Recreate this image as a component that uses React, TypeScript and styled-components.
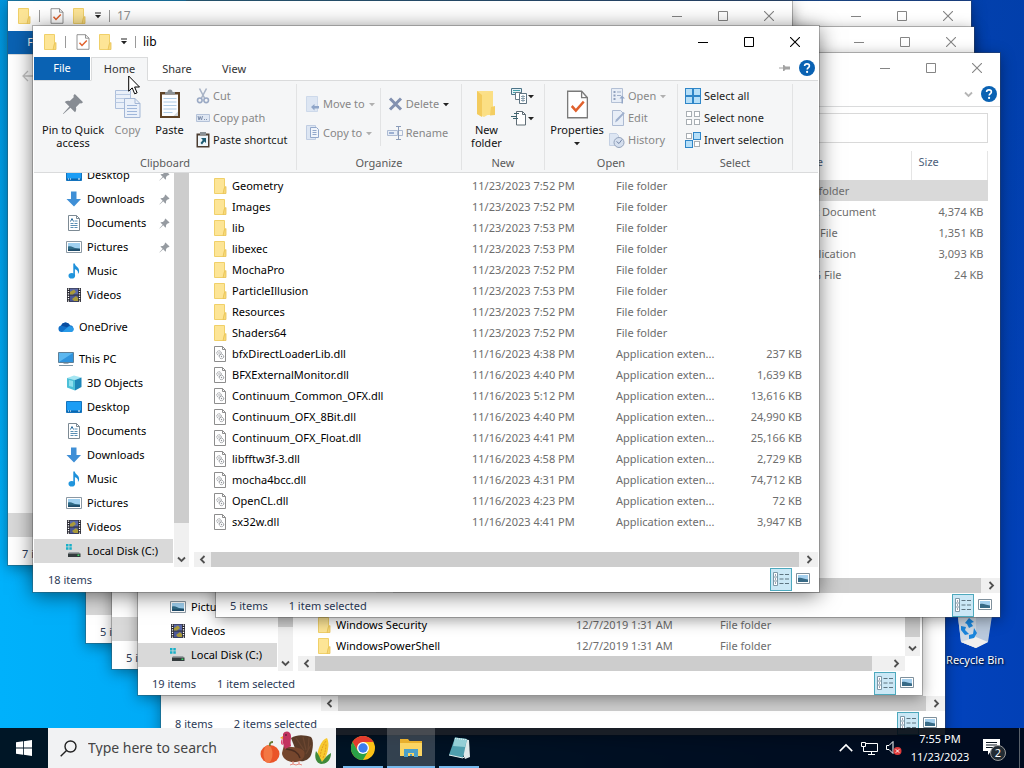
import React from 'react';
import styled, { createGlobalStyle, css } from 'styled-components';

const GlobalStyle = createGlobalStyle`
  *, *::before, *::after { box-sizing: border-box; }
  html, body { margin: 0; padding: 0; height: 100%; overflow: hidden; }
  body { font-family: "Noto Sans", "Open Sans", sans-serif; font-size: 11px; line-height: 16px; color: #111; }
  button, input { font: inherit; color: inherit; }
  button { border: 0; padding: 0; background: none; cursor: default; }
  svg { display: block; flex: none; }
`;

/* ---------- icons ---------- */

const FolderIcon = ({ size = 16 }: { size?: number }) => (
  <svg width={size} height={size} viewBox="0 0 16 16">
    <path d="M2.500.5h10v9.500l-1 5.500h-9z" fill="#fde596" stroke="#f0d069" />
    <path d="M12.500 9.500l1.500-1v7h-3z" fill="#f8da78" stroke="#e8c255" strokeWidth=".8" />
  </svg>
);

const DllIcon = () => (
  <svg width="16" height="16" viewBox="0 0 16 16" fill="none">
    <path d="M2.500.5h8l3 3v12h-11z" fill="#fff" stroke="#8d8d8d" />
    <path d="M10.500.5v3h3" stroke="#8d8d8d" />
    <circle cx="7" cy="7" r="2.200" stroke="#8b8f94" strokeDasharray="1.300 .6" />
    <circle cx="9.500" cy="10.500" r="2.200" stroke="#8b8f94" strokeDasharray="1.300 .6" />
    <circle cx="7" cy="7" r=".7" fill="#8b8f94" />
    <circle cx="9.500" cy="10.500" r=".7" fill="#8b8f94" />
  </svg>
);

const CheckDocIcon = ({ width = 14, height = 16 }: { width?: number; height?: number }) => (
  <svg width={width} height={height} viewBox="0 0 14 16" fill="none" preserveAspectRatio="none">
    <path d="M1 .7h8.500L13 4.200v11.100H1z" fill="#fff" stroke="#7a7a7a" strokeWidth=".8" />
    <path d="M9.500.7v3.500H13" stroke="#7a7a7a" strokeWidth=".8" />
    <path d="M3.500 8.800l2.500 2.600 4.800-5" stroke="#e0602c" strokeWidth="1.500" />
  </svg>
);

const CaretIcon = ({ color = '#222', bar = false }: { color?: string; bar?: boolean }) => (
  <svg width="8" height="8" viewBox="0 0 8 8">
    {bar && <path d="M1 .5h6v1H1z" fill={color} />}
    <path d="M1 3h6L4 6.200z" fill={color} />
  </svg>
);

const HelpIcon = () => (
  <svg width="16" height="16" viewBox="0 0 16 16">
    <circle cx="8" cy="8" r="8" fill="#0a62b3" />
    <path d="M5.600 6.100C5.600 4.700 6.600 3.900 8 3.900s2.400.8 2.400 2c0 1.700-2.200 1.800-2.200 3.700" fill="none" stroke="#fff" strokeWidth="1.600" />
    <circle cx="8.100" cy="11.900" r="1.100" fill="#fff" />
  </svg>
);

const PinIcon = ({ size = 11, color = '#969ba1' }: { size?: number; color?: string }) => (
  <svg width={size} height={size} viewBox="0 0 24 24">
    <path d="M14 1l9 9-2 1.500-1.500-.3-4.300 4.300c.6 2 .3 4-1 5.500l-5-5L1.500 23 1 22.500l7-7.700-5-5c1.500-1.300 3.500-1.600 5.500-1l4.300-4.300L12.500 2.600z" fill={color} />
  </svg>
);

const SidePinIcon = () => (
  <svg width="12" height="8" viewBox="0 0 12 8">
    <path d="M0 3.500h4V1h1.200l1.300 1.500H11V5.500H6.500L5.200 7H4V4.500H0z" fill="#a3a3a3" />
  </svg>
);

const DesktopIcon = () => (
  <svg width="16" height="16" viewBox="0 0 16 16">
    <path d="M.5 2.500h15v11H.5z" fill="#1b9df5" stroke="#1473bd" />
    <path d="M1 11.500h14v1.500H1z" fill="#0b66ae" />
    <path d="M2 12h1M4 12h1M12 12h2" stroke="#fff" />
  </svg>
);

const DownloadIcon = () => (
  <svg width="16" height="16" viewBox="0 0 16 16">
    <path d="M5 .5h5.500V8H15L8 15.500.5 8H5z" fill="#3f8fd6" />
  </svg>
);

const DocumentIcon = () => (
  <svg width="16" height="16" viewBox="0 0 16 16" fill="none">
    <path d="M2.500.5h8l3 3v12h-11z" fill="#fff" stroke="#7d8a94" />
    <path d="M10.500.5v3h3" stroke="#7d8a94" />
    <path d="M4.500 6.500l1.500-3 1.500 3" stroke="#2b6b9b" />
    <path d="M4.500 8.500h3M8.500 6h3M8.500 8.500h3M4.500 10.500h7M4.500 12.500h3M8.500 12.500h3" stroke="#5a8fb4" />
  </svg>
);

const PictureIcon = () => (
  <svg width="16" height="16" viewBox="0 0 16 16">
    <path d="M.5 2.500h15v11H.5z" fill="#fff" stroke="#8b98a3" />
    <path d="M2 4h12v8H2z" fill="#9fd0f0" />
    <path d="M2 7.500c3-1 5 .5 7 1.500l5 .5V12H2z" fill="#2f6a86" />
    <path d="M2 10.500l12-.5v2H2z" fill="#1e4c6b" />
  </svg>
);

const MusicIcon = () => (
  <svg width="16" height="16" viewBox="0 0 16 16">
    <ellipse cx="5.800" cy="12.700" rx="3.300" ry="2.800" fill="#2196dd" />
    <path d="M7.300.5h1.500c.3 3 4.700 3.700 4.300 8-.1 1.200-.7 2-1.200 2.500.6-3-1-4-3-5v7H7.300z" fill="#1e90da" />
  </svg>
);

const VideoIcon = () => (
  <svg width="16" height="16" viewBox="0 0 16 16">
    <path d="M1 1h14v14H1z" fill="#2a2a33" />
    <path d="M4 1.500h8v6H4z" fill="#5a68a8" />
    <path d="M4 8.500h8v6H4z" fill="#4b5796" />
    <path d="M4 5l4-2.500 2 2.500-3 2.500H4zM6 12l4-3 2 2v3H8z" fill="#a99a3a" />
    <path d="M2.500 1.500v14M13.500 1.500v14" stroke="#fff" strokeWidth="1.300" strokeDasharray="1.200 1.200" />
  </svg>
);

const OneDriveIcon = () => (
  <svg width="16" height="16" viewBox="0 0 16 16">
    <path d="M3.500 13A3.300 3.300 0 0 1 3 6.500 5 5 0 0 1 12 6.300 3.400 3.400 0 0 1 12.800 13z" fill="#1170c9" />
    <path d="M4 13l6.500-5.500c2-1 5 .3 5.300 2.600A3 3 0 0 1 12.800 13z" fill="#2a9be8" />
    <path d="M3 6.500A5 5 0 0 1 12 6.300L9 8.200z" fill="#0a4ea0" />
  </svg>
);

const PcIcon = () => (
  <svg width="16" height="16" viewBox="0 0 16 16">
    <path d="M.5 1.500h15v10H.5z" fill="#5bb7f0" stroke="#5d7f98" />
    <path d="M1 11L15 2v9z" fill="#2e93dd" />
    <path d="M5.500 12h5v1h-5z" fill="#9fb0bb" />
    <path d="M1 14.500h14" stroke="#7c95a5" />
  </svg>
);

const CubeIcon = () => (
  <svg width="16" height="16" viewBox="0 0 16 16">
    <path d="M1 3l7-2.500 7.500 2L9 5z" fill="#a6e6f2" />
    <path d="M1 3l8 2v10.500L1 12.500z" fill="#4cc0d8" />
    <path d="M9 5l6.500-2.500V12L9 15.500z" fill="#1d86b8" />
    <path d="M3 5l4 1v6l-4-1z" fill="#8fe0ee" />
  </svg>
);

const DiskIcon = () => (
  <svg width="16" height="16" viewBox="0 0 16 16">
    <path d="M0 1h2.500v2.500H0zM3.300 1h2.500v2.500H3.300zM0 4.300h2.500v2.500H0zM3.300 4.300h2.500v2.500H3.300z" fill="#18b0c8" />
    <path d="M3 9h10l1 1.500H2z" fill="#9aa0a4" />
    <path d="M2 10.500h12.500V14H2z" fill="#333b3d" />
    <path d="M11.500 11.500h1.800V13h-1.800z" fill="#3fdc6a" />
  </svg>
);

const CopyIcon = () => (
  <svg width="26" height="30" viewBox="0 0 26 30" fill="none">
    <path d="M.5 1.500h15v18H.5z" fill="#eaf0f9" stroke="#adbfdb" />
    <path d="M.5 5.500h15M.5 9.500h15M.5 13.500h15" stroke="#b9cae3" />
    <path d="M9.500 9.500h10.500l5 5v14h-15.500z" fill="#eaf0f9" stroke="#a4b7d6" />
    <path d="M20 9.500v5h5" stroke="#a4b7d6" />
    <path d="M12 16.500h10M12 19.500h10M12 22.500h10M12 25.500h10" stroke="#9fb6da" />
  </svg>
);

const PasteIcon = () => (
  <svg width="22" height="30" viewBox="0 0 22 30">
    <path d="M1 3h20v26H1z" fill="#5f4326" />
    <path d="M3 5.500h16V27H3z" fill="#fbfdff" />
    <path d="M6 5.500V3h2.500a2.500 2.500 0 0 1 5 0H16v2.500z" fill="#8a9196" />
    <path d="M4.500 9.500h13M4.500 13h13M4.500 16.500h13M4.500 20h13M4.500 23.500h9" stroke="#aecbe4" />
    <path d="M14.500 27l4.500-4.500V27z" fill="#d4dbe0" />
  </svg>
);

const CutIcon = () => (
  <svg width="14" height="16" viewBox="0 0 14 16" fill="none" stroke="#a9b4c6">
    <path d="M3.500.5l5 9.500M10.500.5l-5 9.500" strokeWidth="1.600" />
    <circle cx="3.800" cy="12.300" r="2.300" strokeWidth="1.600" stroke="#9aa9c4" />
    <circle cx="10.200" cy="12.300" r="2.300" strokeWidth="1.600" stroke="#9aa9c4" />
  </svg>
);

const CopyPathIcon = () => (
  <svg width="14" height="16" viewBox="0 0 14 16" fill="none">
    <path d="M.5 4.500h13v7H.5z" fill="#dfe7f3" stroke="#b4c2d8" />
    <path d="M2 6l1 4 1.200-3.500L5.500 10l1-4M8 9.500h1M10 9.500h1" stroke="#7f90ad" />
  </svg>
);

const PasteShortcutIcon = () => (
  <svg width="14" height="16" viewBox="0 0 14 16">
    <path d="M.5 1.500h13v14H.5z" fill="#4c3d31" />
    <path d="M2 3.500h10V14H2z" fill="#eef6fb" />
    <path d="M4 0h6v3H4z" fill="#8a9196" />
    <path d="M5 6h5v5L8.300 9.400 6 12.500 4.500 11l2.300-3z" fill="#1d5c73" />
  </svg>
);

const MoveToIcon = () => (
  <svg width="14" height="16" viewBox="0 0 14 16">
    <path d="M.5.5h11v15H.5z" fill="#dde6f3" stroke="#cdd9ea" />
    <path d="M5 11l3.500-3v2H13v2.500H8.500v2z" fill="#8fa5c8" />
  </svg>
);

const CopyToIcon = () => (
  <svg width="14" height="16" viewBox="0 0 14 16" fill="none">
    <path d="M.5.500h9v14h-9z" fill="#dde6f3" stroke="#c0cde2" />
    <path d="M4.500 2.500h6l2 2v8h-8z" fill="#f1f5fb" stroke="#93a8cb" />
    <path d="M6.500 5.500h4M6.500 7.500h4M6.500 9.500h4" stroke="#93a8cb" />
  </svg>
);

const DeleteIcon = () => (
  <svg width="16" height="14" viewBox="0 0 16 14">
    <path d="M3 1.500l11 11M14 1.500l-11 11" stroke="#8391b0" strokeWidth="3" />
  </svg>
);

const RenameIcon = () => (
  <svg width="16" height="16" viewBox="0 0 16 16" fill="none">
    <path d="M.5 5.500h10v5H.5z" fill="#e6edf7" stroke="#adbbd3" />
    <path d="M12 5.500h3.500v5H12" stroke="#adbbd3" />
    <path d="M2 7h5v2H2z" fill="#9cb0d2" />
    <path d="M9 1.500h5M11.500 1.500v13M9 14.500h5" stroke="#8b9cb9" />
  </svg>
);

const NewItemIcon = () => (
  <svg width="16" height="16" viewBox="0 0 16 16" fill="none">
    <path d="M.5.500h10v6H.5z" fill="#e4f1f6" stroke="#4c7488" />
    <path d="M2 2.500h7M2 4.500h3" stroke="#3fa0a8" />
    <path d="M4.500 4.500h6v7h-6z" fill="#fff" stroke="#6a7c88" />
    <path d="M8.500 5.500h7v10h-7z" fill="#fff" stroke="#5f7482" />
    <path d="M10 8.500h4M10 10.500h4M10 12.500h4M12 7v7" stroke="#8aa0ae" />
  </svg>
);

const EasyAccessIcon = () => (
  <svg width="16" height="16" viewBox="0 0 16 16" fill="none">
    <path d="M5.500 1.500h6l3 3v10.500h-9z" fill="#fff" stroke="#5f6c75" />
    <path d="M11.500 1.500v3h3" stroke="#5f6c75" />
    <path d="M3 3.500h5M0 6.500h6M2 8.500h5" stroke="#3d6470" />
  </svg>
);

const OpenIcon = () => (
  <svg width="14" height="16" viewBox="0 0 14 16" fill="none">
    <path d="M.5.500h11v14H.5z" fill="#e8eef7" stroke="#b3c0d5" />
    <path d="M2.500 3h2v2h-2zM2.500 6.500h2v2h-2zM2.500 10h2v2h-2z" fill="#8fa0bd" />
    <path d="M6 4h4M6 7.500h4" stroke="#9fafc9" />
    <path d="M10.500 15.500v-5h-2L11 7.500l3 3h-2v5z" fill="#93a6c6" />
  </svg>
);

const EditIcon = () => (
  <svg width="14" height="16" viewBox="0 0 14 16" fill="none">
    <path d="M1.500.500h8l3 3v12h-11z" fill="#e8eef7" stroke="#adbbd3" />
    <path d="M4 12.500l1-3L12.500 2l1.300 1.300L6.500 11z" fill="#9fb0cd" />
  </svg>
);

const HistoryIcon = () => (
  <svg width="14" height="16" viewBox="2 0 14 16" fill="none" overflow="visible">
    <path d="M.5 1.500h7l2 2v10H.5z" fill="#dde6f3" stroke="#c4d0e3" />
    <circle cx="10" cy="10.500" r="5" fill="#d5dfee" stroke="#93a2bb" />
    <path d="M7.500 9.500l2.500 2 3-4" stroke="#7587a8" />
  </svg>
);

const Tile = ({ x, y, on }: { x: number; y: number; on: boolean }) => (
  <rect x={x + 0.5} y={y + 0.5} width={on ? 7 : 5} height={on ? 7 : 5} fill={on ? '#b6dff8' : '#fff'} stroke={on ? '#2f86c8' : '#a8aeb3'} />
);

const SelectIcon = ({ mode }: { mode: 'all' | 'none' | 'invert' }) => (
  <svg width="16" height="16" viewBox="0 0 16 16">
    {mode === 'all' && (<><Tile x={0} y={0} on /><Tile x={8} y={0} on /><Tile x={0} y={8} on /><Tile x={8} y={8} on /></>)}
    {mode === 'none' && (<><Tile x={1} y={1} on={false} /><Tile x={9} y={1} on={false} /><Tile x={1} y={9} on={false} /><Tile x={9} y={9} on={false} /></>)}
    {mode === 'invert' && (<><Tile x={1} y={1} on={false} /><Tile x={8} y={0} on /><Tile x={0} y={8} on /><Tile x={9} y={9} on={false} /></>)}
  </svg>
);

const NewFolderIcon = () => (
  <svg width="24" height="30" viewBox="0 0 24 30">
    <path d="M2 2h16v21l-9 5-7-3z" fill="#fbe08a" />
    <path d="M2 2l5 4v22l-5-3z" fill="#f3cb5e" />
    <path d="M7 6l11-4v24H7z" fill="#fbdf84" />
    <path d="M16 18l4-1v9l-5 .5z" fill="#f4ce62" />
  </svg>
);

const Arrow = ({ dir, size = 9, color = '#505050' }: { dir: 'left' | 'right' | 'down' | 'up'; size?: number; color?: string }) => {
  const d = { left: 'M6.500 1L3 4.500 6.500 8', right: 'M2.500 1L6 4.500 2.500 8', down: 'M1 2.500L4.500 6 8 2.500', up: 'M.5 6.500L4.500 2.500 8.500 6.500' }[dir];
  return (
    <svg width={size} height={size} viewBox="0 0 9 9"><path d={d} fill="none" stroke={color} strokeWidth={size > 10 ? 1 : 1.8} /></svg>
  );
};

const DetailsViewIcon = () => (
  <svg width="16" height="14" viewBox="0 0 16 14" fill="none">
    <path d="M.5.500h4v13h-4zM.5 5h4M.5 9h4" fill="#fff" stroke="#7d98a8" />
    <path d="M2 3h1M2 7h1M2 11h1" stroke="#446" />
    <path d="M6.500 2.500h4M12 2.500h4M6.500 7h4M12 7h4M6.500 11.500h4M12 11.500h4" stroke="#5d7480" />
  </svg>
);

const LargeViewIcon = () => (
  <svg width="14" height="12" viewBox="0 0 14 12">
    <path d="M.5.500h13v10H.5z" fill="#fff" stroke="#7f909c" />
    <path d="M2 2h10v7H2z" fill="#a5d0ee" />
    <path d="M2 5c4-1 5 1 10 1.500V9H2z" fill="#386a86" />
  </svg>
);

/* ---------- window frame ---------- */

const WindowFrame = styled.section<{ $x: number; $y: number; $active?: boolean }>`
  position: absolute;
  left: ${p => p.$x}px;
  top: ${p => p.$y}px;
  width: ${p => (p.$active ? 786 : 784)}px;
  height: ${p => (p.$active ? 566 : 564)}px;
  padding: ${p => (p.$active ? 1 : 0)}px;
  display: flex;
  flex-direction: column;
  background: #fff;
  box-shadow: 0 0 0 1px rgba(70, 70, 70, 0.35), 0 3px ${p => (p.$active ? 20 : 14)}px rgba(0, 0, 0, ${p => (p.$active ? 0.55 : 0.4)});
`;

const TitleBar = styled.header<{ $active?: boolean }>`
  flex: none;
  display: flex;
  align-items: center;
  justify-content: flex-end;
  height: 30px;
  padding-left: 8px;
  font-size: 12px;
  color: ${p => (p.$active ? '#000' : '#8f8f8f')};
`;

const QuickAccess = styled.div`
  display: flex;
  align-items: center;
  flex: 1;
`;

const ToolSlot = styled.span<{ $width: number }>`
  display: flex;
  justify-content: center;
  width: ${p => p.$width}px;
`;

const Separator = styled.span`
  width: 1px;
  height: 12px;
  background: #9a9a9a;
`;

const WindowTitle = styled.h1`
  margin: 0 0 0 1px;
  font-size: inherit;
  font-weight: 400;
`;

const CaptionButton = styled.button`
  display: flex;
  align-items: center;
  justify-content: center;
  width: 46px;
  height: 29px;
  margin-bottom: 1px;
`;

const TabRow = styled.nav`
  flex: none;
  display: flex;
  align-items: center;
  gap: 1px;
  height: 24px;
  padding-right: 3px;
  border-bottom: 1px solid #dadbdc;
`;

const Tab = styled.button<{ $kind?: 'file' | 'current' }>`
  height: 24px;
  width: 56px;
  line-height: 22px;
  color: #333;
  ${p => p.$kind === 'file' && css`background: #0a62b3; color: #fff; height: 23px; margin-bottom: 1px;`}
  ${p => p.$kind === 'current' && css`
    width: 57px;
    background: #f5f6f7;
    border: 1px solid #dadbdc;
    border-bottom-color: #f5f6f7;
  `}
`;

const TabTools = styled.div`
  display: flex;
  align-items: center;
  gap: 8px;
  margin: 0 0 1px auto;
`;

const Body = styled.div`
  flex: 1;
  min-height: 0;
  display: flex;
`;

const StatusBar = styled.footer`
  flex: none;
  display: flex;
  align-items: center;
  gap: 21px;
  height: 24px;
  padding: 0 4px 0 14px;
  color: #2b3a57;
`;

const StatusText = styled.span`
  padding-top: 2px;
`;

const ViewButtons = styled.div`
  display: flex;
  align-items: center;
  margin-left: auto;
`;

const ViewButton = styled.button<{ $on?: boolean }>`
  display: flex;
  align-items: center;
  justify-content: center;
  width: 22px;
  height: 23px;
  border: 1px solid ${p => (p.$on ? '#4ea9bd' : 'transparent')};
  background: ${p => (p.$on ? '#cbe8f6' : 'transparent')};
`;

const CaptionButtons = ({ active }: { active?: boolean }) => {
  const stroke = active ? '#000' : '#858585';
  return (
    <>
      <CaptionButton aria-label="Minimize"><svg width="10" height="10" viewBox="0 0 10 10"><path d="M0 5.500h10" stroke={stroke} /></svg></CaptionButton>
      <CaptionButton aria-label="Maximize"><svg width="10" height="10" viewBox="0 0 10 10"><path d="M.5.500h9v9h-9z" fill="none" stroke={stroke} /></svg></CaptionButton>
      <CaptionButton aria-label="Close"><svg width="10" height="10" viewBox="0 0 10 10"><path d="M0 0l10 10M10 0L0 10" stroke={stroke} strokeWidth="1.100" /></svg></CaptionButton>
    </>
  );
};

/* ---------- scroll bars ---------- */

const VBar = styled.div<{ $right?: boolean }>`
  flex: none;
  display: flex;
  flex-direction: column;
  width: 15px;
  margin-left: ${p => (p.$right ? 0 : 1)}px;
  margin-right: ${p => (p.$right ? 2 : 0)}px;
  background: #f0f0f0;
`;

const HBar = styled.div<{ $corner: number }>`
  flex: none;
  display: flex;
  height: 15px;
  margin-right: ${p => p.$corner}px;
  background: #f0f0f0;
`;

const Thumb = styled.div<{ $rest: number; $vertical?: boolean }>`
  flex: 1;
  background: #cdcdcd;
  margin: ${p => (p.$vertical ? `0 0 ${p.$rest}px` : `0 ${p.$rest}px 0 0`)};
`;

const ScrollButton = styled.button<{ $width: number }>`
  flex: none;
  display: flex;
  align-items: center;
  justify-content: center;
  width: ${p => p.$width}px;
  height: 15px;
`;

const VerticalScroll = ({ rest, right }: { rest: number; right?: boolean }) => (
  <VBar $right={right}>
    <Thumb $vertical $rest={rest} />
    <ScrollButton $width={15} aria-label="Scroll down"><Arrow dir="down" /></ScrollButton>
  </VBar>
);

const HorizontalScroll = ({ rest, corner }: { rest: number; corner: number }) => (
  <HBar $corner={corner}>
    <ScrollButton $width={17} aria-label="Scroll left"><Arrow dir="left" /></ScrollButton>
    <Thumb $rest={rest} />
    <ScrollButton $width={17} aria-label="Scroll right"><Arrow dir="right" /></ScrollButton>
  </HBar>
);

/* ---------- navigation pane ---------- */

const NavPane = styled.nav`
  flex: none;
  width: 139px;
  display: flex;
  flex-direction: column;
  justify-content: flex-end;
  padding-bottom: 4px;
  overflow: hidden;
`;

const NavItem = styled.a<{ $root?: boolean; $selected?: boolean }>`
  flex: none;
  display: flex;
  align-items: center;
  gap: 5px;
  height: 24px;
  padding: 0 3px 0 ${p => (p.$root ? 24 : 32)}px;
  margin-top: ${p => (p.$root ? 8 : 0)}px;
  background: ${p => (p.$selected ? '#d9d9d9' : 'transparent')};
  color: #000;
  text-decoration: none;
  white-space: nowrap;
`;

const NavLabel = styled.span`
  flex: 1;
`;

type NavEntry = { label: string; icon: React.ReactNode; root?: boolean; pinned?: boolean; selected?: boolean };

const allPlaces: NavEntry[] = [
  { label: 'Desktop', icon: <DesktopIcon />, pinned: true },
  { label: 'Downloads', icon: <DownloadIcon />, pinned: true },
  { label: 'Documents', icon: <DocumentIcon />, pinned: true },
  { label: 'Pictures', icon: <PictureIcon />, pinned: true },
  { label: 'Music', icon: <MusicIcon /> },
  { label: 'Videos', icon: <VideoIcon /> },
  { label: 'OneDrive', icon: <OneDriveIcon />, root: true },
  { label: 'This PC', icon: <PcIcon />, root: true },
  { label: '3D Objects', icon: <CubeIcon /> },
  { label: 'Desktop', icon: <DesktopIcon /> },
  { label: 'Documents', icon: <DocumentIcon /> },
  { label: 'Downloads', icon: <DownloadIcon /> },
  { label: 'Music', icon: <MusicIcon /> },
  { label: 'Pictures', icon: <PictureIcon /> },
  { label: 'Videos', icon: <VideoIcon /> },
  { label: 'Local Disk (C:)', icon: <DiskIcon />, selected: true },
];

const lastPlaces = allPlaces.slice(-3);
const selectionOnly: NavEntry[] = [{ label: '', icon: null, selected: true }];

const Navigation = ({ places }: { places: NavEntry[] }) => (
  <NavPane>
    {places.map((e, i) => (
      <NavItem key={i} href="#" $root={e.root} $selected={e.selected}>
        {e.icon}
        <NavLabel>{e.label}</NavLabel>
        {e.pinned && <PinIcon />}
      </NavItem>
    ))}
  </NavPane>
);

/* ---------- file list ---------- */

const ListColumn = styled.div<{ $left: number }>`
  flex: 1;
  min-width: 0;
  display: flex;
  flex-direction: column;
  margin-left: ${p => p.$left}px;
`;

const ListRow = styled.div`
  flex: 1;
  min-height: 0;
  display: flex;
`;

const ListArea = styled.div<{ $bottom?: boolean }>`
  flex: 1;
  display: flex;
  flex-direction: column;
  justify-content: ${p => (p.$bottom ? 'flex-end' : 'flex-start')};
  padding: 2px 12px 0 20px;
  overflow: hidden;
`;

const FileTable = styled.table`
  width: 100%;
  table-layout: fixed;
  border-collapse: collapse;
`;

const HeadCell = styled.th`
  height: 29px;
  padding: 0 0 7px 7px;
  border-right: 1px solid #e5e5e5;
  text-align: left;
  font-weight: 400;
  color: #4c607a;
`;

const FileRow = styled.tr<{ $selected?: boolean }>`
  height: 21px;
  background: ${p => (p.$selected ? '#d9d9d9' : 'transparent')};
`;

const Cell = styled.td<{ $right?: boolean }>`
  padding: ${p => (p.$right ? '0 4px 0 0' : '0 0 0 7px')};
  text-align: ${p => (p.$right ? 'right' : 'left')};
  color: #6d6d6d;
  white-space: nowrap;
`;

const NameCell = styled(Cell)`
  padding: 0;
  color: #000;
`;

const NameLine = styled.span`
  display: flex;
  align-items: center;
  gap: 4px;
  margin-left: -2px;
`;

type FileEntry = { name?: string; date?: string; type: string; size?: string; selected?: boolean };

const Files = ({ files, head }: { files: FileEntry[]; head?: boolean }) => (
  <FileTable>
    <colgroup>
      <col width="251" />
      <col width="144" />
      <col width="120" />
      <col />
    </colgroup>
    {head && (
      <thead>
        <tr>
          <HeadCell aria-label="Name" />
          <HeadCell aria-label="Date modified" />
          <HeadCell>Type</HeadCell>
          <HeadCell>Size</HeadCell>
        </tr>
      </thead>
    )}
    <tbody>
      {files.map((f, i) => (
        <FileRow key={i} $selected={f.selected}>
          <NameCell>
            {f.name && <NameLine>{f.type === 'File folder' ? <FolderIcon /> : <DllIcon />}{f.name}</NameLine>}
          </NameCell>
          <Cell>{f.date}</Cell>
          <Cell>{f.type}</Cell>
          <Cell $right>{f.size}</Cell>
        </FileRow>
      ))}
    </tbody>
  </FileTable>
);

const folder = (name: string, date: string): FileEntry => ({ name, date, type: 'File folder' });
const dll = (name: string, time: string, size: string): FileEntry => ({ name, date: `11/16/2023 ${time}`, type: 'Application exten...', size });

const libFiles: FileEntry[] = [
  folder('Geometry', '11/23/2023 7:52 PM'),
  folder('Images', '11/23/2023 7:52 PM'),
  folder('lib', '11/23/2023 7:53 PM'),
  folder('libexec', '11/23/2023 7:53 PM'),
  folder('MochaPro', '11/23/2023 7:52 PM'),
  folder('ParticleIllusion', '11/23/2023 7:53 PM'),
  folder('Resources', '11/23/2023 7:52 PM'),
  folder('Shaders64', '11/23/2023 7:52 PM'),
  dll('bfxDirectLoaderLib.dll', '4:38 PM', '237 KB'),
  dll('BFXExternalMonitor.dll', '4:40 PM', '1,639 KB'),
  dll('Continuum_Common_OFX.dll', '5:12 PM', '13,616 KB'),
  dll('Continuum_OFX_8Bit.dll', '4:40 PM', '24,990 KB'),
  dll('Continuum_OFX_Float.dll', '4:41 PM', '25,166 KB'),
  dll('libfftw3f-3.dll', '4:58 PM', '2,729 KB'),
  dll('mocha4bcc.dll', '4:31 PM', '74,712 KB'),
  dll('OpenCL.dll', '4:23 PM', '72 KB'),
  dll('sx32w.dll', '4:41 PM', '3,947 KB'),
];

const programFiles: FileEntry[] = [
  folder('Windows Security', '12/7/2019 1:31 AM'),
  folder('WindowsPowerShell', '12/7/2019 1:31 AM'),
];

const setupFiles: FileEntry[] = [
  { type: 'File folder', selected: true },
  { type: 'Text Document', size: '4,374 KB' },
  { type: 'KEY File', size: '1,351 KB' },
  { type: 'Application', size: '3,093 KB' },
  { type: 'PNG File', size: '24 KB' },
];

/* ---------- ribbon ---------- */

const Ribbon = styled.div`
  flex: none;
  display: flex;
  height: 92px;
  background: #f5f6f7;
  border-bottom: 1px solid #dadbdc;
`;

const Group = styled.section<{ $width: number }>`
  display: flex;
  flex-direction: column;
  width: ${p => p.$width}px;
  margin: 3px 0 2px;
  border-right: 1px solid #e2e3e4;
`;

const GroupTools = styled.div`
  flex: 1;
  display: flex;
`;

const GroupLabel = styled.h2`
  margin: 0;
  height: 14px;
  line-height: 14px;
  text-align: center;
  font-size: 11px;
  font-weight: 400;
  color: #5a5a5a;
`;

const BigButton = styled.button<{ $width: number }>`
  display: flex;
  flex-direction: column;
  align-items: center;
  gap: 3px;
  width: ${p => p.$width}px;
  padding-top: 4px;
  line-height: 13px;
  &:disabled { color: #8a8a8a; }
`;

const BigIcon = styled.span`
  display: flex;
  align-items: center;
  height: 32px;
`;

const SmallStack = styled.div<{ $pitch: number; $left: number }>`
  display: flex;
  flex-direction: column;
  padding: ${p => (p.$pitch > 22 ? 5 : 1)}px 0 0 ${p => p.$left}px;
  & > button { height: ${p => p.$pitch}px; }
`;

const SmallButton = styled.button`
  display: flex;
  align-items: center;
  gap: 3px;
  white-space: nowrap;
  color: #1c1c1c;
  &:disabled { color: #878787; }
`;

const IconButton = styled(SmallButton)`
  gap: 0;
`;

const InnerRule = styled.span`
  width: 1px;
  height: 58px;
  margin: 4px 0 0 4px;
  background: #e2e3e4;
`;

const HomeRibbon = () => (
  <Ribbon>
    <Group $width={263}>
      <GroupTools>
        <BigButton $width={78}><BigIcon><PinIcon size={22} color="#878c93" /></BigIcon><span>Pin to Quick<br />access</span></BigButton>
        <BigButton $width={31} disabled><BigIcon><CopyIcon /></BigIcon>Copy</BigButton>
        <BigButton $width={53}><BigIcon><PasteIcon /></BigIcon>Paste</BigButton>
        <SmallStack $pitch={22} $left={0}>
          <SmallButton disabled><CutIcon />Cut</SmallButton>
          <SmallButton disabled><CopyPathIcon />Copy path</SmallButton>
          <SmallButton><PasteShortcutIcon />Paste shortcut</SmallButton>
        </SmallStack>
      </GroupTools>
      <GroupLabel>Clipboard</GroupLabel>
    </Group>
    <Group $width={165}>
      <GroupTools>
        <SmallStack $pitch={29} $left={9}>
          <SmallButton disabled><MoveToIcon />Move to<CaretIcon color="#b0b0b0" /></SmallButton>
          <SmallButton disabled><CopyToIcon />Copy to<CaretIcon color="#b0b0b0" /></SmallButton>
        </SmallStack>
        <InnerRule />
        <SmallStack $pitch={29} $left={6}>
          <SmallButton disabled><DeleteIcon />Delete<CaretIcon /></SmallButton>
          <SmallButton disabled><RenameIcon />Rename</SmallButton>
        </SmallStack>
      </GroupTools>
      <GroupLabel>Organize</GroupLabel>
    </Group>
    <Group $width={83}>
      <GroupTools>
        <BigButton $width={49}><BigIcon><NewFolderIcon /></BigIcon><span>New<br />folder</span></BigButton>
        <SmallStack $pitch={22} $left={0}>
          <IconButton aria-label="New item"><NewItemIcon /><CaretIcon /></IconButton>
          <IconButton aria-label="Easy access"><EasyAccessIcon /><CaretIcon /></IconButton>
        </SmallStack>
      </GroupTools>
      <GroupLabel>New</GroupLabel>
    </Group>
    <Group $width={133}>
      <GroupTools>
        <BigButton $width={64}><BigIcon><CheckDocIcon width={23} height={29} /></BigIcon>Properties<CaretIcon /></BigButton>
        <SmallStack $pitch={22} $left={2}>
          <SmallButton disabled><OpenIcon />Open<CaretIcon color="#b0b0b0" /></SmallButton>
          <SmallButton disabled><EditIcon />Edit</SmallButton>
          <SmallButton disabled><HistoryIcon />History</SmallButton>
        </SmallStack>
      </GroupTools>
      <GroupLabel>Open</GroupLabel>
    </Group>
    <Group $width={115}>
      <GroupTools>
        <SmallStack $pitch={22} $left={7}>
          <SmallButton><SelectIcon mode="all" />Select all</SmallButton>
          <SmallButton><SelectIcon mode="none" />Select none</SmallButton>
          <SmallButton><SelectIcon mode="invert" />Invert selection</SmallButton>
        </SmallStack>
      </GroupTools>
      <GroupLabel>Select</GroupLabel>
    </Group>
  </Ribbon>
);

/* ---------- explorer window ---------- */

const AddressRow = styled.div`
  flex: none;
  display: flex;
  align-items: center;
  gap: 8px;
  height: 42px;
  padding: 0 12px 1px 14px;
`;

const AddressInput = styled.input`
  flex: 1;
  height: 30px;
  margin-left: 100px;
  border: 1px solid #d9d9d9;
  background: #fff;
`;

const BackButton = styled.button`
  color: #c4c4c4;
`;

type ExplorerProps = {
  x: number;
  y: number;
  name: string;
  title?: string;
  tabs?: string[];
  places?: NavEntry[];
  navScroll?: boolean;
  status?: string[];
  files?: FileEntry[];
  head?: boolean;
  listScroll?: boolean;
  active?: boolean;
};

const Explorer = ({ x, y, name, title, tabs = [], places = [], navScroll, status = [], files = [], head, listScroll, active }: ExplorerProps) => (
  <WindowFrame $x={x} $y={y} $active={active} aria-label={name}>
    <TitleBar $active={active}>
      {title && (
        <QuickAccess>
          <ToolSlot $width={16}><FolderIcon /></ToolSlot>
          <ToolSlot $width={15}><Separator /></ToolSlot>
          <ToolSlot $width={19}><CheckDocIcon /></ToolSlot>
          <ToolSlot $width={26}><FolderIcon /></ToolSlot>
          <ToolSlot $width={11}><CaretIcon bar /></ToolSlot>
          <ToolSlot $width={13}><Separator /></ToolSlot>
          <WindowTitle>{title}</WindowTitle>
        </QuickAccess>
      )}
      <CaptionButtons active={active} />
    </TitleBar>
    <TabRow>
      {tabs.map(t => (
        <Tab key={t} $kind={t === 'File' ? 'file' : t === 'Home' ? 'current' : undefined}>{t}</Tab>
      ))}
      <TabTools>
        {active ? <SidePinIcon /> : <Arrow dir="down" color="#b5b5b5" />}
        <HelpIcon />
      </TabTools>
    </TabRow>
    {active ? <HomeRibbon /> : (
      <AddressRow>
        <BackButton aria-label="Back">
          <svg width="14" height="12" viewBox="0 0 14 12"><path d="M6 1L1 6l5 5M1 6h12" fill="none" stroke="currentColor" strokeWidth="1.300" /></svg>
        </BackButton>
        <AddressInput aria-label="Address" />
      </AddressRow>
    )}
    <Body>
      <Navigation places={places} />
      {navScroll && <VerticalScroll rest={29} />}
      <ListColumn $left={navScroll ? 5 : 21}>
        <ListRow>
          <ListArea $bottom={listScroll}><Files files={files} head={head} /></ListArea>
          {listScroll && <VerticalScroll right rest={4} />}
        </ListRow>
        <HorizontalScroll rest={listScroll ? 16 : 2} corner={listScroll ? 17 : 0} />
      </ListColumn>
    </Body>
    <StatusBar>
      {status.map(s => <StatusText key={s}>{s}</StatusText>)}
      <ViewButtons>
        <ViewButton $on aria-label="Details view"><DetailsViewIcon /></ViewButton>
        <ViewButton aria-label="Large icons view"><LargeViewIcon /></ViewButton>
      </ViewButtons>
    </StatusBar>
  </WindowFrame>
);

/* ---------- desktop and taskbar ---------- */

const Desktop = styled.main`
  position: relative;
  height: 100vh;
  display: flex;
  flex-direction: column;
  justify-content: flex-end;
  overflow: hidden;
  background:
    linear-gradient(to bottom, rgba(0, 60, 130, 0.22), rgba(0, 60, 130, 0) 70%),
    linear-gradient(to right, #00b1fb 0, #00aaf6 17%, #0468d8 60%, #0242bb 94%, #0240b6 100%);
`;

const DesktopShortcut = styled.a`
  position: absolute;
  right: 8px;
  top: 601px;
  width: 82px;
  display: flex;
  flex-direction: column;
  align-items: center;
  gap: 3px;
  color: #fff;
  text-decoration: none;
  text-shadow: 1px 1px 2px #000;
  white-space: nowrap;
`;

const Cursor = styled.svg`
  position: absolute;
  left: 128px;
  top: 75px;
`;

const Taskbar = styled.footer`
  position: relative;
  display: flex;
  height: 40px;
  background: rgba(0, 6, 14, 0.9);
  color: #fff;
`;

const StartButton = styled.button`
  display: flex;
  align-items: center;
  justify-content: center;
  width: 48px;
`;

const SearchBox = styled.label`
  display: flex;
  align-items: center;
  gap: 11px;
  width: 288px;
  padding: 0 4px 0 12px;
  margin-right: 3px;
  background: #f1f2f3;
  color: #444;
`;

const SearchInput = styled.input`
  flex: 1;
  min-width: 0;
  border: 0;
  padding: 0;
  outline: 0;
  background: none;
  font-size: 14px;
  &::placeholder { color: #454545; opacity: 1; }
`;

const TaskButton = styled.button<{ $current?: boolean }>`
  display: flex;
  align-items: center;
  justify-content: center;
  width: 48px;
  background: ${p => (p.$current ? 'rgba(255,255,255,.2)' : 'none')};
  box-shadow: ${p => (p.$current ? 'inset 0 -2px #76b9ed' : 'none')};
`;

const RunningMark = styled.span`
  display: flex;
  align-items: center;
  justify-content: center;
  width: 40px;
  height: 40px;
  box-shadow: inset 0 -2px #76b9ed;
`;

const Tray = styled.div`
  display: flex;
  align-items: center;
  gap: 8px;
  margin-left: auto;
`;

const Clock = styled.time`
  width: 60px;
  line-height: 18px;
  text-align: center;
`;

const ActionCenter = styled.button`
  display: flex;
  margin: 4px 0 0 5px;
`;

const Badge = styled.span`
  align-self: flex-end;
  width: 16px;
  height: 16px;
  margin: 6px 0 0 -10px;
  border: 1px solid #9a9a9a;
  border-radius: 50%;
  background: #222b33;
  line-height: 14px;
  text-align: center;
`;

const ShowDesktop = styled.button`
  width: 5px;
  height: 40px;
  margin-left: 5px;
  border-left: 1px solid #59616a;
`;

const HarvestArt = () => (
  <svg width="72" height="36" viewBox="0 0 72 36">
    <ellipse cx="10" cy="24" rx="9.500" ry="9" fill="#ea5427" />
    <ellipse cx="8" cy="24" rx="4.500" ry="9" fill="#f37743" />
    <path d="M10 16c-1-3 1-4 3-4" fill="none" stroke="#6b7a35" strokeWidth="1.800" />
    <path d="M31 8c6-4 14-3 20-1 3 3 2 12 0 18-2 5-8 7-11 6z" fill="#5a3b28" />
    <path d="M36 8l8 12M43 7l3 13M49 8l-1 12M51 15l-5 9" stroke="#6b4630" strokeWidth="1.300" />
    <path d="M24 15c6 3 16 1 20 6 2 5-1 10-8 11-8 1-14-4-14-9z" fill="#75462d" />
    <path d="M26 19c8 1 12 3 14 9" fill="none" stroke="#4b2d20" strokeWidth="1.500" />
    <path d="M23 4c2-4 8-3 8 2 0 4-1 6 0 10l-6 3c-2-5-3-8-2-12z" fill="#c2335f" />
    <path d="M23 6l-3 2 3 1z" fill="#f3a12e" />
    <path d="M22 9c-2 3-1 6 1 6z" fill="#e04070" />
    <circle cx="26" cy="5" r=".8" fill="#222" />
    <path d="M33 31v3l-3 1M33 34l3 1M39 31v3l-3 1M39 34l3 1" stroke="#e8897d" fill="none" />
    <path d="M57 29c0-9 4-19 10-21 3 5 1 17-4 24z" fill="#f7c92f" />
    <path d="M60 27c1-7 3-12 6-16M63 28c2-5 3-9 3-14" stroke="#e39c1e" strokeDasharray="2 1" fill="none" />
    <path d="M56 21c-2 6 0 12 5 13 7 0 10-5 10-11-4 2-6 5-9 9-2-4-3-7-6-11z" fill="#3f8a3a" />
  </svg>
);

const ChromeIcon = () => (
  <svg width="24" height="24" viewBox="0 0 24 24">
    <circle cx="12" cy="12" r="12" fill="#fbc116" />
    <path d="M12 6h10.400A12 12 0 0 0 1.600 6l5.200 9z" fill="#e33b2e" />
    <path d="M1.600 6A12 12 0 0 0 12 24l5.200-9H6.800z" fill="#2aa147" />
    <circle cx="12" cy="12" r="6" fill="#fff" />
    <circle cx="12" cy="12" r="4.700" fill="#3b7ded" />
  </svg>
);

const ExplorerIcon = () => (
  <svg width="22" height="20" viewBox="0 0 22 20">
    <path d="M0 1h8l1.500 2H22v15H0z" fill="#e9b02d" />
    <path d="M0 5h22v13H0z" fill="#fbd563" />
    <path d="M4 11h14v8h-4v-4H8v4H4z" fill="#4c9fc9" />
    <path d="M10 16h2v2h-2z" fill="#4c9fc9" />
  </svg>
);

const NotepadIcon = () => (
  <svg width="24" height="24" viewBox="0 0 24 24">
    <path d="M9 2l13 2 1 17-5 2z" fill="#dfe9ea" />
    <path d="M8 1.500L20 3l-4 19-14-3z" fill="#4f9fae" />
    <path d="M8 1.500L20 3l-2 8-12-1z" fill="#94cfd6" />
    <path d="M2 19l14 3 2-2" fill="none" stroke="#e9f3f3" />
    <path d="M8 2.500l12 1.300" stroke="#e6eeee" strokeDasharray="1 1" />
  </svg>
);

const RecycleBinIcon = () => (
  <svg width="40" height="48" viewBox="0 0 40 48">
    <path d="M2 8h36l-5 33-12 6-15-6z" fill="#b9c9dc" />
    <path d="M2 8h19v39L6 41z" fill="#cfdae6" />
    <path d="M21 36l12 5-12 6-15-6z" fill="#f0efee" />
    <path d="M10 22l4-5 5 4-3 1 2 3-4 2-2-4zM6 25l5 1-1 3 4 4-4 1-4-5zM14 34l4-1 1-6 3 5-3 5-5 1z" fill="#1a86dd" />
  </svg>
);

export default function App() {
  return (
    <Desktop>
      <GlobalStyle />
      <DesktopShortcut href="#"><RecycleBinIcon />Recycle Bin</DesktopShortcut>
      <Explorer x={161} y={171} name="Window 1" status={['8 items', '2 items selected']} />
      <Explorer x={187} y={1} name="Window 2" />
      <Explorer x={190} y={27} name="Window 3" />
      <Explorer x={86} y={79} name="Window 4" places={selectionOnly} status={['5 items']} />
      <Explorer x={112} y={105} name="Window 5" places={selectionOnly} status={['5 items']} />
      <Explorer x={138} y={131} name="Window 6" places={lastPlaces} navScroll status={['19 items', '1 item selected']} files={programFiles} listScroll />
      <Explorer x={216} y={53} name="Window 7" status={['5 items', '1 item selected']} files={setupFiles} head />
      <Explorer x={8} y={1} name="17" title="17" tabs={['File']} places={selectionOnly} status={['7 items']} />
      <Explorer x={33} y={26} name="lib" title="lib" tabs={['File', 'Home', 'Share', 'View']} places={allPlaces} navScroll status={['18 items']} files={libFiles} active />
      <Cursor width="13" height="20" viewBox="0 0 13 20" aria-hidden="true">
        <path d="M.7 1v15.200l3.500-3.300 2.500 5.900 2.400-1-2.500-5.800h4.900z" fill="#fff" stroke="#000" />
      </Cursor>
      <Taskbar>
        <StartButton aria-label="Start">
          <svg width="16" height="16" viewBox="0 0 16 16"><path d="M0 2.300L7 1.300v6.300H0zM7.800 1.200L16 0v7.600H7.800zM0 8.400h7v6.300l-7-1zM7.800 8.400H16V16l-8.200-1.200z" fill="#fff" /></svg>
        </StartButton>
        <SearchBox>
          <svg width="17" height="17" viewBox="0 0 17 17" fill="none" stroke="#222" strokeWidth="1.400"><circle cx="10.500" cy="6.500" r="5.500" /><path d="M6.500 10.500L.7 16.300" /></svg>
          <SearchInput placeholder="Type here to search" aria-label="Search" />
          <HarvestArt />
        </SearchBox>
        <TaskButton aria-label="Chrome"><RunningMark><ChromeIcon /></RunningMark></TaskButton>
        <TaskButton $current aria-label="File Explorer"><ExplorerIcon /></TaskButton>
        <TaskButton aria-label="Notepad"><RunningMark><NotepadIcon /></RunningMark></TaskButton>
        <Tray>
          <Arrow dir="up" size={14} color="#fff" />
          <svg width="17" height="15" viewBox="0 0 17 15" fill="none" stroke="#fff"><path d="M4.500 2.500h12v8h-12M10.500 10.500v3M7 13.500h7M.5 1.500h4v4h-4zM2.500 5.500v5h4" /></svg>
          <svg width="16" height="16" viewBox="0 0 16 16"><path d="M.5 5.500H3l4-4v12l-4-4H.500z" fill="none" stroke="#fff" /><circle cx="11.500" cy="11" r="4" fill="#df3a3a" /><path d="M9.800 9.300l3.400 3.400M13.200 9.300l-3.400 3.400" stroke="#fff" /></svg>
          <Clock>7:55 PM<br />11/23/2023</Clock>
          <ActionCenter aria-label="Notifications">
            <svg width="17" height="17" viewBox="0 0 17 17"><path d="M0 0h17v12H8l-3 4v-4H0z" fill="#fff" /><path d="M3 3.500h11M3 6h11M3 8.500h7" stroke="#0b1722" /></svg>
            <Badge>2</Badge>
          </ActionCenter>
          <ShowDesktop aria-label="Show desktop" />
        </Tray>
      </Taskbar>
    </Desktop>
  );
}
